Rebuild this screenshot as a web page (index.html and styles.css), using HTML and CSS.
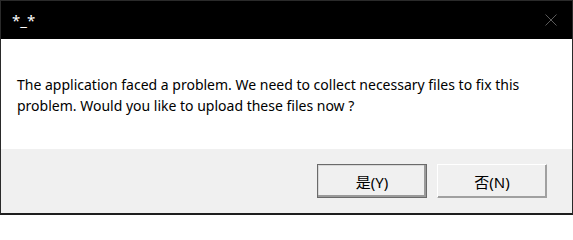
FILE: index.html
```html
<!DOCTYPE html>
<html>
<head>
<meta charset="utf-8">
<link rel="stylesheet" href="styles.css">
</head>
<body>
<div class="window">
  <div class="titlebar">
    <span class="title">*_*</span>
    <svg class="close" width="12" height="12" viewBox="0 0 12 12">
      <path d="M0.5 0.5 L11.5 11.5 M11.5 0.5 L0.5 11.5" stroke="#5a5a5a" stroke-width="1" fill="none"/>
    </svg>
  </div>
  <div class="content">
    <p class="message">The application faced a problem. We need to collect necessary files to fix this<br>problem. Would you like to upload these files now ?</p>
  </div>
  <div class="footer">
    <button class="btn btn-default">是(Y)</button>
    <button class="btn">否(N)</button>
  </div>
</div>
</body>
</html>
```
FILE: styles.css
```css
html, body {
  margin: 0;
  padding: 0;
  background: #ffffff;
}
.window {
  width: 573px;
  height: 215px;
  box-sizing: border-box;
  border: 1px solid #2a2a2a;
  border-bottom: 2px solid #1e1e1e;
  display: flex;
  flex-direction: column;
  font-family: "Segoe UI", "Noto Sans", "Noto Sans CJK SC", sans-serif;
}
.titlebar {
  height: 38px;
  background: #000000;
  display: flex;
  align-items: center;
  justify-content: space-between;
  padding: 0 15px 0 11px;
  flex: none;
}
.title {
  color: #ffffff;
  font-size: 15px;
  line-height: 20px;
}
.close {
  display: block;
}
.content {
  height: 110px;
  background: #ffffff;
  flex: none;
  box-sizing: border-box;
  padding: 35px 0 0 16px;
}
.message {
  margin: 0;
  font-size: 14px;
  line-height: 21px;
  color: #000000;
}
.footer {
  flex: 1;
  background: #f0f0f0;
  display: flex;
  justify-content: flex-end;
  align-items: flex-start;
  gap: 10px;
  padding: 15px 25px 0 0;
}
.btn {
  width: 110px;
  height: 34px;
  box-sizing: border-box;
  margin: 0;
  padding: 0;
  background: #f0f0f0;
  font-family: "Segoe UI", "Noto Sans", "Noto Sans CJK SC", sans-serif;
  font-size: 15px;
  color: #000000;
  border: 1px solid;
  border-color: #ffffff #a0a0a0 #a0a0a0 #ffffff;
  box-shadow: inset -1px -1px 0 #a0a0a0;
}
.btn-default {
  border-color: #6a6a6a;
  box-shadow: inset -2px -2px 0 #9a9a9a, inset 1px 1px 0 #d8d8d8;
}
```
